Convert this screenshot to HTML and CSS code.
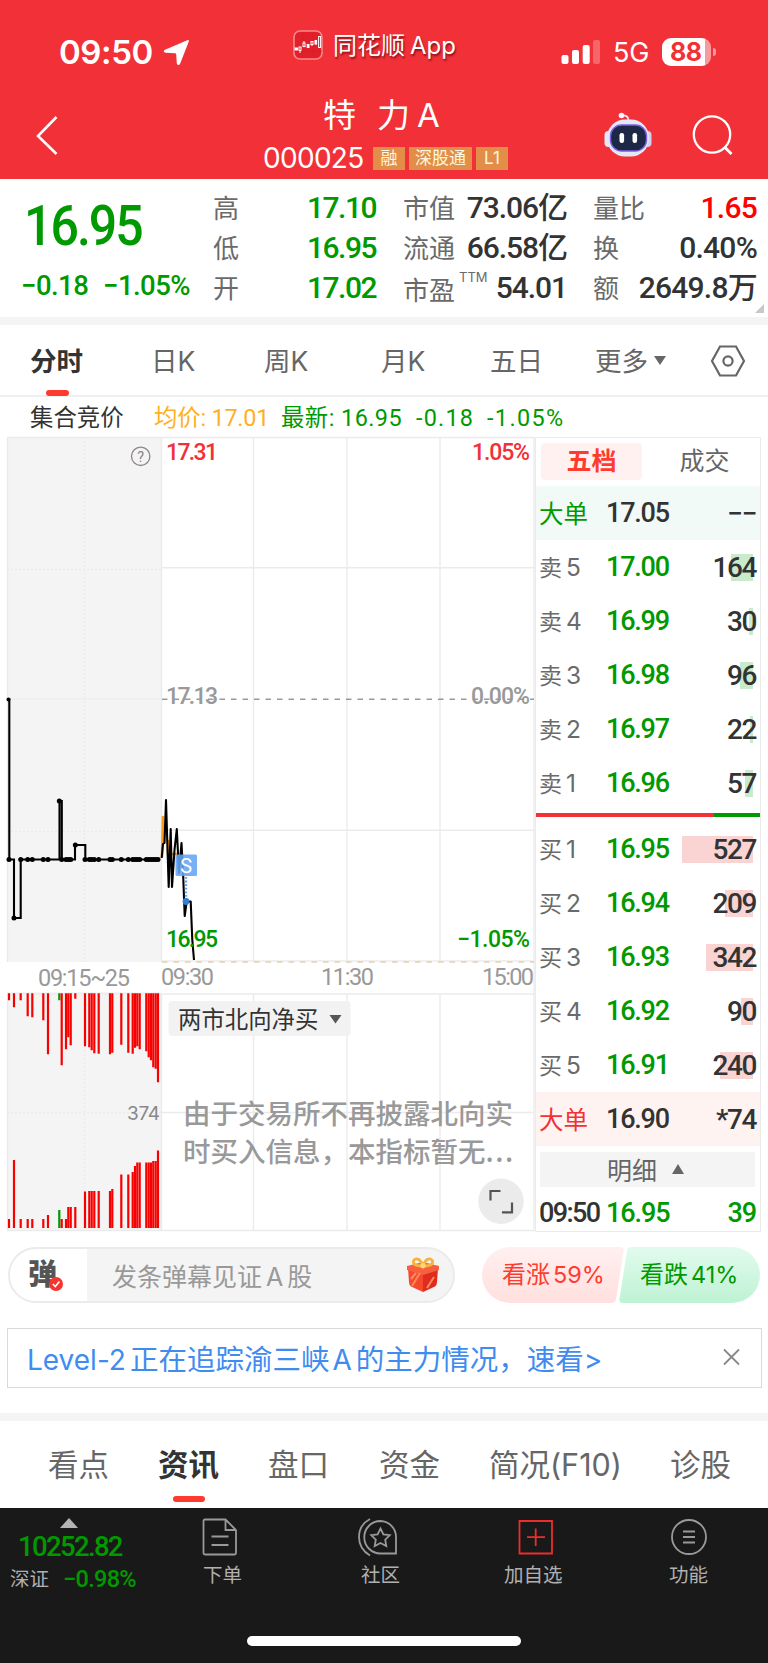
FILE: index.html
```html
<!DOCTYPE html>
<html lang="zh-CN">
<head>
    <meta charset="UTF-8">
    <meta name="viewport" content="width=device-width, initial-scale=1.0">
    <title>特力A 000025</title>
    <link rel="stylesheet" href="styles.css">
</head>
<body>
    <header class="header">
        <div class="status-bar">
            <span class="clock">09:50</span>
            <svg class="location" width="27" height="27" viewBox="0 0 27 27"><path d="M24.2 1.2 Q26.4 0.4 25.8 2.4 L17.2 24.5 Q15.4 27.6 13.8 24.5 L13.2 15.4 Q13.1 14.4 12 14.3 L2.4 13.8 Q-0.8 12.4 2 10.8 Z" fill="#fff"/></svg>
            <svg class="app-icon" width="30" height="30" viewBox="0 0 30 30">
                <rect x="1" y="1" width="28" height="28" rx="6" fill="#e3202a" stroke="#f6898c" stroke-width="1.6"/>
                <path d="M1 21H29M10 2V28M20 2V28" stroke="#c9242c" stroke-width="0.6"/>
                <g stroke="#fff" stroke-width="1">
                    <rect x="2" y="18" width="2.4" height="2" fill="#fff"/>
                    <rect x="6" y="17" width="2" height="3.4" fill="none"/><path d="M7 20V23"/>
                    <rect x="10" y="13" width="2" height="3.6" fill="none"/><path d="M11 11V13"/>
                    <rect x="14.2" y="14.5" width="1.8" height="3" fill="#fff"/>
                    <rect x="18" y="11.5" width="2" height="3" fill="none"/><path d="M19 14V16"/>
                    <rect x="22" y="10.5" width="1.6" height="3.6" fill="#fff"/>
                    <rect x="25.6" y="6.5" width="2" height="11" fill="none"/>
                </g>
            </svg>
            <span class="app-name">同花顺<i>App</i></span>
            <svg class="signal" width="40" height="26" viewBox="0 0 40 26">
                <rect x="0.5" y="16" width="7" height="9" rx="2" fill="#fff"/>
                <rect x="11" y="11" width="7" height="14" rx="2" fill="#fff"/>
                <rect x="21.7" y="6" width="7" height="19" rx="2" fill="#fff"/>
                <rect x="32" y="1" width="7" height="24" rx="2" fill="#f6656a"/>
            </svg>
            <span class="network">5G</span>
            <span class="battery">88</span>
            <span class="battery-tip"></span>
        </div>
        <div class="title-bar">
            <svg class="back" width="24" height="42" viewBox="0 0 24 42"><path d="M21.5 2 L3 21 L21.5 39" fill="none" stroke="#fff" stroke-width="2.6"/></svg>
            <div class="stock">
                <h1><span>特</span><span>力</span><i>A</i></h1>
                <div class="stock-code">
                    <span class="code">000025</span>
                    <span class="tag tag-s">融</span>
                    <span class="tag">深股通</span>
                    <span class="tag tag-s">L1</span>
                </div>
            </div>
            <svg class="robot" width="48" height="46" viewBox="0 0 48 46">
                <path d="M17 3.5 Q24 2.5 24.5 8" fill="none" stroke="#dfe3f5" stroke-width="1.8"/>
                <circle cx="17.5" cy="3.5" r="2.8" fill="#f3f5fd"/>
                <rect x="0.5" y="19" width="8" height="16" rx="4" fill="#e6e9f8"/>
                <rect x="39.5" y="19" width="8" height="16" rx="4" fill="#cfd1ee"/>
                <rect x="3" y="7.5" width="42" height="37" rx="18" fill="#e4e7f6"/>
                <rect x="6.5" y="13" width="36" height="26" rx="11" fill="#1d2847" stroke="#7b5fe0" stroke-width="1.4"/>
                <rect x="15.5" y="21" width="4.6" height="10" rx="2.2" fill="#fff"/>
                <rect x="28.5" y="21" width="4.6" height="10" rx="2.2" fill="#fff"/>
            </svg>
            <svg class="search" width="42" height="42" viewBox="0 0 42 42"><circle cx="20" cy="19.5" r="18.2" fill="none" stroke="#fff" stroke-width="2.3"/><path d="M32.5 32 L39.5 39" stroke="#fff" stroke-width="2.8"/></svg>
        </div>
    </header>

    <section class="summary">
        <div class="price">
            <div class="price-now num">16.95</div>
            <div class="price-diff num"><span>−0.18</span><span>−1.05%</span></div>
        </div>
        <dl class="quotes">
            <dt>高</dt><dd class="green">17.10</dd>
            <dt>市值</dt><dd>73.06<b>亿</b></dd>
            <dt>量比</dt><dd class="red">1.65</dd>
            <dt>低</dt><dd class="green">16.95</dd>
            <dt>流通</dt><dd>66.58<b>亿</b></dd>
            <dt>换</dt><dd>0.40%</dd>
            <dt>开</dt><dd class="green">17.02</dd>
            <dt class="pe">市盈<sup>TTM</sup></dt><dd>54.01</dd>
            <dt>额</dt><dd>2649.8<b>万</b></dd>
        </dl>
        <span class="corner"></span>
    </section>

    <nav class="chart-tabs">
        <span class="active">分时</span>
        <span>日K</span>
        <span>周K</span>
        <span>月K</span>
        <span>五日</span>
        <span>更多<i class="caret"></i></span>
        <svg width="36" height="32" viewBox="0 0 36 32"><path d="M10 1.5 H26 L34 16 L26 30.5 H10 L2 16 Z" fill="none" stroke="#666" stroke-width="2.2"/><circle cx="18" cy="16" r="4.6" fill="none" stroke="#666" stroke-width="2.2"/></svg>
    </nav>

    <div class="chart-info">
        <span class="auction">集合竞价</span>
        <span class="avg">均价: 17.01</span>
        <span class="last">最新: 16.95</span>
        <span class="last diff">-0.18</span>
        <span class="last pct">-1.05%</span>
    </div>

    <main class="market">
        <svg class="chart" width="535" height="796" viewBox="0 436 535 796">
            <rect x="7" y="437" width="154" height="525" fill="#f4f4f4"/>
            <rect x="7" y="992" width="154" height="238" fill="#f4f4f4"/>
            <!-- grid -->
            <g fill="none" stroke="#ebebeb" stroke-width="1.4">
                <path d="M7 437.5H534M7.5 437V962M161.5 437V962M534 437V1231"/>
                <path d="M253.5 437V962M347 437V962M440 437V962"/>
                <path d="M162 567.7H534M162 830.3H534"/>
                <path d="M162 961H534M7 994H534M161.5 994V1231M7.5 994V1231M7 1230.5H534"/>
                <path d="M253.5 994V1230M347 994V1230M440 994V1230M162 1112.5H534"/>
                <path d="M7 699H161" stroke-width="1"/>
                <path d="M84.5 437V962M84.5 994V1230M7 569.5H161M7 831.5H161M7 1112.7H161" stroke-dasharray="2 2"/>
            </g>
            <path d="M162 699.3H534" stroke="#999" stroke-width="1.4" stroke-dasharray="5.5 6"/>
            <path d="M162 962H534" stroke="#e6d0b0" stroke-width="1.6" stroke-dasharray="5.5 6"/>

            <g id="volume"></g>

            <!-- call auction -->
            <path d="M7.5 699.5H9.3V859.5H14V918H20.7V859.5H59.5V801H61.8V859.5H75V845H85.3V859.5H160" fill="none" stroke="#000" stroke-width="2.1"/>
            <g id="dots"></g>

            <path d="M162 857 L163 816 V843 M168 840 V854 H177" fill="none" stroke="#ff9c1a" stroke-width="2.6"/>
            <path d="M161.7 858 L163 844 L164.5 843 L166 800 L168.7 887 L170.7 829 L172 887 L174.5 850 L176.8 829 L179 873 L181.5 843 L183.2 876 L184.7 916 L186.7 901.5 L190.7 901.5 L192.3 940 L194 960" fill="none" stroke="#000" stroke-width="2.1" stroke-linejoin="round"/>
            <path d="M186 877V901" stroke="#64a5f2" stroke-width="2.4" stroke-dasharray="1.8 1.8"/>
            <circle cx="186" cy="901.5" r="3.4" fill="#357ed0"/>
            <rect x="175.5" y="854.5" width="21.5" height="21.5" rx="1.5" fill="#64a5f2" fill-opacity="0.88"/>
            <text x="186.2" y="872.5" font-size="20" fill="#fff" text-anchor="middle">S</text>

            <g class="axis">
                <text x="166" y="459.5" textLength="52" fill="#f23037">17.31</text>
                <text x="472" y="459.5" textLength="58" fill="#f23037">1.05%</text>
                <text x="166" y="703.5" textLength="52" fill="#999">17.13</text>
                <text x="471" y="703.5" textLength="59" fill="#999">0.00%</text>
                <text x="166" y="947" textLength="52" fill="#009900">16.95</text>
                <text x="457" y="947" textLength="73" fill="#009900">−1.05%</text>
            </g>
            <g class="time">
                <text x="38" y="986" textLength="92">09:15~25</text>
                <text x="161" y="984.5" textLength="53">09:30</text>
                <text x="321" y="984.5" textLength="53">11:30</text>
                <text x="482" y="984.5" textLength="52">15:00</text>
            </g>
            <text class="volume-mid" x="127" y="1120" textLength="33">374</text>

            <circle cx="140.7" cy="456.3" r="9.2" fill="none" stroke="#888" stroke-width="1.3"/>
            <text x="140.7" y="461.5" font-size="14.5" fill="#888" text-anchor="middle">?</text>

            <!-- indicator picker -->
            <rect x="168.5" y="1001" width="182" height="35" rx="4" fill="#f2f2f2"/>
            <text class="cjk" x="178" y="1028" font-size="23.4" fill="#333">两市北向净买</text>
            <path d="M329.5 1015H341.5L335.5 1023.5Z" fill="#555"/>
            <text class="cjk notice" x="183" y="1124">由于交易所不再披露北向实</text>
            <text class="cjk notice" x="183" y="1162">时买入信息，本指标暂无<tspan letter-spacing="1.6">...</tspan></text>
            <circle cx="501" cy="1201.3" r="22.7" fill="#ebebeb"/>
            <path d="M490.5 1200.5V1191H500.5M502 1212.3H512V1202.5" fill="none" stroke="#555" stroke-width="2.2"/>
        </svg>

        <aside class="orders">
            <div class="orders-tabs"><span class="active">五档</span><span>成交</span></div>
            <div id="sell"></div>
            <div class="ratio"><i></i></div>
            <div id="buy"></div>
            <div class="detail-btn">明细<i></i></div>
            <div class="detail num"><span>09:50</span><b>16.95</b><b>39</b></div>
        </aside>
    </main>

    <section class="danmu">
        <div class="danmu-input">
            <span class="danmu-logo">弹<svg width="14" height="14" viewBox="0 0 14 14"><circle cx="7" cy="7" r="7" fill="#f5352e"/><path d="M3.8 7 L6.3 9.6 L10.4 4.6" fill="none" stroke="#fff" stroke-width="1.6"/></svg></span>
            <span class="danmu-text">发条弹幕见证<i>A</i>股</span>
            <svg class="gift" width="34" height="36" viewBox="0 0 34 36">
                <path d="M2 11 L17 15 V35 L5 29.5 Q3 28 3 25 Z" fill="#f5492e"/>
                <path d="M32 11 L17 15 V35 L29 29.5 Q31 28 31 25 Z" fill="#df2b20"/>
                <path d="M1 9 L17 5 L33 9 V13 L17 18 L1 13 Z" fill="#f7603f"/>
                <path d="M6 29 L14 16 M5 22 L10 16 M21 31 L28 20" stroke="#ff8a5c" stroke-width="2"/>
                <path d="M17 9 Q5 9 8 3 Q13 -1 17 9 Q21 -1 26 3 Q29 9 17 9Z" fill="none" stroke="#f6b23c" stroke-width="2.8"/>
                <circle cx="17" cy="8.5" r="2.6" fill="#ffd978"/>
            </svg>
        </div>
        <div class="vote">
            <svg width="279" height="56" viewBox="0 0 279 56">
                <defs>
                    <linearGradient id="up" x1="0" y1="0" x2="0" y2="1"><stop offset="0" stop-color="#fff0ef"/><stop offset="1" stop-color="#ffe0de"/></linearGradient>
                    <linearGradient id="down" x1="0" y1="0" x2="0" y2="1"><stop offset="0" stop-color="#e2fbee"/><stop offset="1" stop-color="#bef2d3"/></linearGradient>
                </defs>
                <path d="M28 0 H138 Q142 0 141.5 4 L134 52 Q133 56 129 56 H28 A28 28 0 0 1 28 0Z" fill="url(#up)"/>
                <path d="M149 0 H250 A28 28 0 0 1 250 56 H141 Q137 56 137.5 52 L145 4 Q145.5 0 149 0Z" fill="url(#down)"/>
            </svg>
            <span class="vote-up">看涨<i>59%</i></span>
            <span class="vote-down">看跌<i>41%</i></span>
        </div>
    </section>

    <div class="banner">
        <span><i>Level-2</i>正在追踪渝三峡<i class="a">A</i>的主力情况，速看<i class="gt">&gt;</i></span>
        <svg width="17" height="18" viewBox="0 0 17 18"><path d="M1 1.5 L16 16.5 M16 1.5 L1 16.5" stroke="#888" stroke-width="1.8"/></svg>
    </div>

    <nav class="info-tabs">
        <span>看点</span>
        <span class="active">资讯</span>
        <span>盘口</span>
        <span>资金</span>
        <span>简况<i>(F10)</i></span>
        <span>诊股</span>
    </nav>

    <footer class="footer">
        <div class="toolbar">
            <div class="index">
                <i class="up"></i>
                <div class="index-value num">10252.82</div>
                <div class="index-diff"><span>深证</span><b class="num">−0.98%</b></div>
            </div>
            <div class="tool tool-order">
                <svg width="40" height="40" viewBox="0 0 40 40"><path d="M25.5 2.5 H5 Q3.5 2.5 3.5 4 V36 Q3.5 37.5 5 37.5 H34.5 Q36 37.5 36 36 V13 Z M25.5 2.5 V13 H36 M11.5 19.5 H28.5 M11.5 28 H28.5"/></svg>
                <span>下单</span>
            </div>
            <div class="tool tool-community">
                <svg width="40" height="40" viewBox="0 0 40 40"><path d="M22.5 4 A16.2 16.2 0 1 0 22.5 36.5 H38 V20 A16 16 0 0 0 22.5 4Z M12 2 Q1 8 1 20 Q1 32 12 38.5 M22.5 11.5 L25.4 17.3 L31.8 18.2 L27.2 22.7 L28.3 29 L22.5 26 L16.7 29 L17.8 22.7 L13.2 18.2 L19.6 17.3Z"/></svg>
                <span>社区</span>
            </div>
            <div class="tool tool-add">
                <svg width="40" height="40" viewBox="0 0 40 40"><path d="M3.5 4 H36 V36.5 H3.5Z M11 20.2 H29 M19.7 11.5 V29"/></svg>
                <span>加自选</span>
            </div>
            <div class="tool tool-more">
                <svg width="40" height="40" viewBox="0 0 40 40"><circle cx="20" cy="20" r="17"/><path d="M14 14.5 H26 M14 20 H26 M14 25.5 H26"/></svg>
                <span>功能</span>
            </div>
        </div>
        <div class="home-indicator"></div>
    </footer>

    <script>
        const sell = [
            ['大单', '17.05', '−−', 0],
            ['卖5', '17.00', '164', 22.5],
            ['卖4', '16.99', '30', 4],
            ['卖3', '16.98', '96', 13],
            ['卖2', '16.97', '22', 3.5],
            ['卖1', '16.96', '57', 8]
        ];
        const buy = [
            ['买1', '16.95', '527', 71.5],
            ['买2', '16.94', '209', 28],
            ['买3', '16.93', '342', 47],
            ['买4', '16.92', '90', 12.5],
            ['买5', '16.91', '240', 33],
            ['大单', '16.90', '*74', 0]
        ];

        // x, height from the top, height from the bottom
        const volume = [
            [9, 7, 9], [14, 14, 68], [20.7, 7, 9], [27.7, 23, 9], [32.3, 24, 9],
            [43.3, 27, 9], [48, 61, 13], [59.3, 7, 18], [61.7, 72, 9], [66, 56, 9],
            [68.3, 44, 21], [70.7, 52, 21], [75.3, 5.5, 21], [85, 53, 36.5], [89.3, 54, 37],
            [91.7, 57, 37], [94.3, 60, 37], [98.7, 60.5, 37], [110, 61, 37], [112.3, 59.5, 39],
            [121.3, 51.5, 53.5], [128.3, 59.5, 53.5], [132.7, 60.5, 56], [135, 54.5, 62],
            [137.3, 53, 65.5], [139.7, 56, 65.5], [146.3, 58, 65.5], [148.7, 64, 65.5],
            [151, 67, 65.5], [153.3, 74, 67], [155.7, 75.5, 67], [158, 89, 77.5]
        ];

        function showOrders(id, rows) {
            document.getElementById(id).innerHTML = rows.map(([label, price, amount, bar]) => `
                <div class="order ${label === '大单' ? 'big' : ''}">
                    <span class="order-label">${label.replace(/\d/, '<i>$&</i>')}</span>
                    <span class="order-price num">${price}</span>
                    <span class="order-bar" style="width: ${bar}px"></span>
                    <span class="order-amount num">${amount}</span>
                </div>`).join('');
        }

        function drawVolume() {
            document.getElementById('volume').innerHTML = volume.map(([x, top, bottom]) => {
                const color = x === 59.3 ? '#009900' : '#f80000';
                return `<path d="M${x} 993.3v${top}M${x} 1228v${-bottom}" stroke="${color}" stroke-width="2.2"/>`;
            }).join('');
        }

        // one dot for every auction tick, at the level the line has there
        function drawDots() {
            document.getElementById('dots').innerHTML = volume.map(([x]) => {
                let y = 859.5;
                if (x === 14) y = 918;
                if (x === 59.3) y = 801;
                if (x === 75.3) y = 845;
                return `<circle cx="${x}" cy="${y}" r="2.5"/>`;
            }).join('') + '<circle cx="8.5" cy="699.5" r="2"/>';
        }

        showOrders('sell', sell);
        showOrders('buy', buy);
        drawVolume();
        drawDots();
    </script>
</body>
</html>
```

FILE: styles.css
```css
* {
    box-sizing: border-box;
}
body {
    margin: 0;
    width: 768px;
    height: 1663px;
    overflow: hidden;
    background-color: #fff;
    color: #333;
    font-family: Inter, "Noto Sans CJK SC", sans-serif;
}
i {
    font-style: normal;
}
span, dt, dd, h1 {
    white-space: nowrap;
}
.num {
    font-family: Roboto, "Noto Sans CJK SC", sans-serif;
    font-weight: 500;
    letter-spacing: -0.04em;
}
.green {
    color: #009900;
}
.red {
    color: #ff0000;
}

/* header */
.header {
    height: 179px;
    background-color: #f23037;
    color: #fff;
}
.status-bar {
    display: flex;
    align-items: center;
    height: 88px;
    padding: 16px 0 0 59px;
}
.clock {
    width: 104px;
    font-size: 33px;
    font-weight: 600;
    letter-spacing: -0.4px;
}
.location {
    margin-right: 103px;
}
.app-icon {
    margin: -14px 10px 0 0;
}
.app-name {
    width: 228px;
    margin-top: -18px;
    font-size: 24px;
    text-shadow: 1px 2px 2px rgba(60, 0, 0, 0.6);
}
.app-name i {
    margin-left: 5px;
}
.network {
    width: 49px;
    margin-left: 12px;
    font-size: 27px;
    letter-spacing: -0.2px;
}
.battery {
    width: 49px;
    height: 28px;
    padding-left: 8px;
    border-radius: 9px;
    background: linear-gradient(90deg, #fff 43px, #f89a9d 43px);
    color: #f23037;
    font-size: 25px;
    font-weight: 700;
    line-height: 28px;
    letter-spacing: -0.5px;
}
.battery-tip {
    width: 3px;
    height: 8px;
    margin-left: 2px;
    border-radius: 0 4px 4px 0;
    background-color: #f89a9d;
}
.title-bar {
    display: flex;
    align-items: flex-start;
    height: 91px;
    padding-left: 35px;
}
.back {
    margin-top: 27px;
}
.stock {
    width: 340px;
    margin-left: 205px;
}
.stock h1 {
    display: flex;
    height: 56px;
    margin: 0;
    padding-left: 59px;
    font-size: 33px;
    font-weight: 400;
    line-height: 54px;
}
.stock h1 span {
    width: 54px;
}
.stock h1 i {
    margin-left: -14px;
}
.stock-code {
    display: flex;
    align-items: center;
    height: 28px;
}
.code {
    width: 105px;
    margin: 0 5px 0 -1px;
    font-size: 28px;
    letter-spacing: -0.7px;
}
.tag {
    width: 63px;
    height: 23px;
    margin-right: 4px;
    background-color: #e28e49;
    color: #fff6df;
    font-size: 17px;
    line-height: 22px;
    text-align: center;
}
.tag-s {
    width: 32px;
}
.robot {
    margin-top: 24px;
}
.search {
    margin: 27px 0 0 40px;
}

/* summary */
.summary {
    position: relative;
    display: flex;
    height: 146px;
    border-bottom: 8px solid #f4f4f4;
}
.price {
    width: 213px;
    padding-left: 21px;
    color: #009900;
}
.price-now {
    width: 140px;
    margin-left: 3px;
    padding-top: 12px;
    font-size: 55px;
    line-height: 70px;
    transform: scaleX(0.91);
    transform-origin: left;
}
.price-diff {
    display: flex;
    margin-top: 9px;
    font-size: 27.5px;
    line-height: 32px;
    letter-spacing: -0.02em;
}
.price-diff span {
    width: 82px;
}
.quotes {
    display: grid;
    grid-template-columns: 50px 113px 27px 60px 104px 26px 53px 111px;
    grid-template-rows: 40px 40px 40px;
    margin: 9px 0 0;
}
.quotes dt {
    padding-top: 1px;
    color: #6a6a6a;
    font-size: 26px;
    line-height: 40px;
}
.quotes dt:nth-of-type(3n+1) {
    grid-column: 1;
}
.quotes dt:nth-of-type(3n+2) {
    grid-column: 4;
}
.quotes dt:nth-of-type(3n) {
    grid-column: 7;
}
.quotes dd {
    margin: 0;
    font-family: Roboto, "Noto Sans CJK SC", sans-serif;
    font-size: 30px;
    font-weight: 500;
    line-height: 40px;
    letter-spacing: -0.035em;
    text-align: right;
}
.quotes .green {
    letter-spacing: -0.05em;
}
.quotes dd:nth-of-type(3n+2) {
    margin-left: -20px;
}
.quotes dd:nth-of-type(3n) {
    margin-left: -30px;
    letter-spacing: -0.025em;
}
.quotes b {
    font-weight: 500;
}
.quotes .pe {
    position: relative;
    padding-top: 3px;
}
.quotes sup {
    position: absolute;
    left: 56px;
    top: -11px;
    font-size: 13px;
}
.corner {
    position: absolute;
    right: 4px;
    bottom: 4px;
    border-bottom: 9px solid #c8c8c8;
    border-left: 9px solid transparent;
}

/* chart tabs */
.chart-tabs {
    display: grid;
    grid-template-columns: 121px 113px 117px 109px 105px 115px 40px;
    align-items: center;
    height: 72px;
    padding-left: 30px;
    border-bottom: 2px solid #f0f0f0;
    color: #666;
    font-size: 26.5px;
}
.chart-tabs span {
    margin-top: -1px;
}
.chart-tabs svg {
    margin-top: 1px;
}
.chart-tabs .active {
    position: relative;
    color: #333;
    font-weight: 700;
}
.chart-tabs .active::after {
    content: "";
    position: absolute;
    left: 16px;
    bottom: -17px;
    width: 23px;
    height: 6px;
    border-radius: 3px;
    background-color: #ff3b30;
}
.caret {
    display: inline-block;
    margin: 0 0 6px 6px;
    border: 6.5px solid transparent;
    border-top: 9px solid #666;
    border-bottom: 0;
}
.chart-info {
    display: flex;
    height: 39px;
    padding-left: 30px;
    font-size: 23.4px;
    line-height: 43px;
}
.chart-info span {
    font-family: Roboto, "Noto Sans CJK SC", sans-serif;
}
.auction {
    width: 124px;
}
.avg {
    width: 127px;
    color: #ffb01f;
    letter-spacing: -0.2px;
}
.last {
    width: 135px;
    color: #009900;
    letter-spacing: 0.45px;
}
.chart-info .diff {
    width: 71px;
    letter-spacing: 1.2px;
}
.chart-info .pct {
    letter-spacing: 1.4px;
}

/* chart and order book */
.market {
    display: flex;
    height: 796px;
}
.chart {
    flex: none;
    font-family: Roboto, "Noto Sans CJK SC", sans-serif;
}
.axis text {
    font-size: 23px;
    font-weight: 500;
}
.time text {
    font-size: 23.5px;
    fill: #999;
}
.volume-mid {
    font-family: Inter, sans-serif;
    font-size: 19px;
    fill: #888;
}
.chart .cjk {
    font-family: "Noto Sans CJK SC", sans-serif;
}
.notice {
    font-size: 27.5px;
    font-weight: 500;
    fill: #999;
}
.orders {
    width: 226px;
    margin-top: 1px;
    border: 1.5px solid #ebebeb;
}
.orders-tabs {
    display: flex;
    height: 48px;
    padding: 5px 0 0 5px;
    font-size: 25px;
    line-height: 36px;
    color: #666;
}
.orders-tabs span {
    flex: none;
    width: 101px;
    height: 37px;
    border-radius: 4px;
    text-align: center;
}
.orders-tabs .active {
    margin-right: 12px;
    background-color: #fff1f0;
    color: #ff3b30;
    font-weight: 700;
}
.order {
    position: relative;
    display: flex;
    align-items: center;
    height: 54px;
    padding-left: 3px;
}
.order.big {
    background-color: #f1faf6;
}
#buy .order.big {
    background-color: #fff3f2;
}
.order-label {
    width: 67px;
    margin-top: -2px;
    color: #6a6a6a;
    font-size: 23px;
}
.order-label i {
    margin-left: 4px;
    font-size: 24.5px;
}
.big .order-label {
    color: #009900;
    font-size: 24.5px;
}
#buy .big .order-label {
    color: #f23037;
}
.order-price {
    color: #009900;
    font-size: 27px;
    letter-spacing: -0.045em;
}
.big .order-price {
    color: #333;
}
.order-bar {
    position: absolute;
    right: 7px;
    height: 27px;
    background-color: #c9eacb;
}
#buy .order-bar {
    background-color: #fad3d3;
}
.order-amount {
    position: relative;
    margin-left: auto;
    padding-right: 4px;
    font-size: 28px;
    letter-spacing: -0.05em;
}
.ratio {
    height: 4px;
    margin: 3px 0 5px;
    background-color: #009900;
}
.ratio i {
    display: block;
    width: 178px;
    height: 4px;
    background-color: #f23037;
}
.detail-btn {
    display: flex;
    align-items: center;
    height: 35px;
    margin: 6px 5px 6px 4px;
    padding: 0 0 1px 67px;
    background-color: #f4f4f4;
    color: #666;
    font-size: 25px;
}
.detail-btn i {
    margin-left: 15px;
    border: 6.5px solid transparent;
    border-bottom: 10px solid #666;
    border-top: 0;
}
.detail {
    display: flex;
    height: 38px;
    padding: 1px 4px 0 3px;
    font-size: 27px;
    line-height: 38px;
}
.detail span {
    width: 67px;
    letter-spacing: -0.06em;
}
.detail b {
    font-weight: 500;
    color: #009900;
}
.detail b:last-child {
    margin-left: auto;
}

/* danmu */
.danmu {
    display: flex;
    padding: 15px 8px 0;
    height: 96px;
}
.danmu-input {
    display: flex;
    flex: none;
    align-items: center;
    width: 447px;
    height: 56px;
    border: 2px solid #ebebeb;
    border-radius: 28px;
    background: linear-gradient(90deg, #fff 77px, #f4f4f4 77px);
}
.danmu-logo {
    position: relative;
    width: 102px;
    padding-left: 18px;
    color: #555;
    font-size: 29px;
    font-weight: 900;
    line-height: 50px;
}
.danmu-logo svg {
    position: absolute;
    left: 39px;
    top: 27px;
}
.danmu-text {
    width: 294px;
    color: #999;
    font-size: 25px;
}
.danmu-text i {
    margin: 0 4px;
}
.vote {
    position: relative;
    flex: none;
    width: 278px;
    margin-left: 27px;
    font-size: 24px;
}
.vote span {
    position: absolute;
    top: 0;
    line-height: 56px;
}
.vote i {
    margin-left: 3px;
    font-size: 23.5px;
}
.vote-up {
    left: 20px;
    color: #ff3b30;
}
.vote-down {
    left: 158px;
    color: #009900;
}

.banner {
    display: flex;
    justify-content: space-between;
    align-items: center;
    height: 60px;
    margin: 0 6px 25px 7px;
    padding: 0 21px 2px 19px;
    border: 1.5px solid #d9d9d9;
    color: #3f8cf0;
    font-size: 28.5px;
}
.banner i {
    margin-right: 4px;
    font-size: 28px;
}
.banner .a {
    margin: 0 4px 0 3px;
}
.banner .gt {
    margin-right: 0;
}

/* info tabs */
.info-tabs {
    display: grid;
    grid-template-columns: 110px 110px 111px 110px 181px 80px;
    height: 95px;
    padding-left: 48px;
    border-top: 8px solid #f4f4f4;
    color: #666;
    font-size: 30.5px;
    line-height: 88px;
}
.info-tabs .active {
    position: relative;
    color: #333;
    font-weight: 700;
}
.info-tabs .active::after {
    content: "";
    position: absolute;
    left: 15px;
    bottom: 7px;
    width: 32px;
    height: 6px;
    border-radius: 3px;
    background-color: #ff3b30;
}
.info-tabs i {
    font-size: 30.5px;
}

/* footer */
.footer {
    height: 155px;
    background-color: #191919;
    color: #b0b0b0;
}
.toolbar {
    display: flex;
    height: 127px;
}
.index {
    flex: none;
    width: 200px;
    padding: 10px 0 0 10px;
}
.up {
    display: block;
    width: 0;
    margin-left: 50px;
    border: 9px solid transparent;
    border-bottom: 10px solid #b4b4b4;
    border-top: 0;
}
.index-value {
    margin-left: 8px;
    color: #009900;
    font-size: 27.5px;
    line-height: 38px;
    letter-spacing: -0.06em;
}
.index-diff {
    display: flex;
    font-size: 19.5px;
    line-height: 26px;
}
.index-diff span {
    width: 53px;
}
.index-diff b {
    color: #009900;
    font-size: 23.5px;
    letter-spacing: -0.03em;
}
.tool {
    display: flex;
    flex: none;
    flex-direction: column;
    width: 156px;
    padding-top: 9px;
    font-size: 19.5px;
    line-height: 36px;
}
.tool svg {
    fill: none;
    stroke: #999;
    stroke-width: 1.8;
}
.tool span {
    margin-left: 3px;
}
.tool-community {
    width: 155px;
    margin-left: 2px;
}
.tool-add {
    width: 156px;
}
.tool-add svg {
    margin-left: 3px;
    stroke: #ee2c2c;
}
.tool-add span {
    margin-left: -9px;
}
.tool-more {
    width: 90px;
}
.tool-more span {
    margin-left: 0;
}
.home-indicator {
    width: 274px;
    height: 10px;
    margin: 1px 0 0 247px;
    border-radius: 5px;
    background-color: #fff;
}
```
